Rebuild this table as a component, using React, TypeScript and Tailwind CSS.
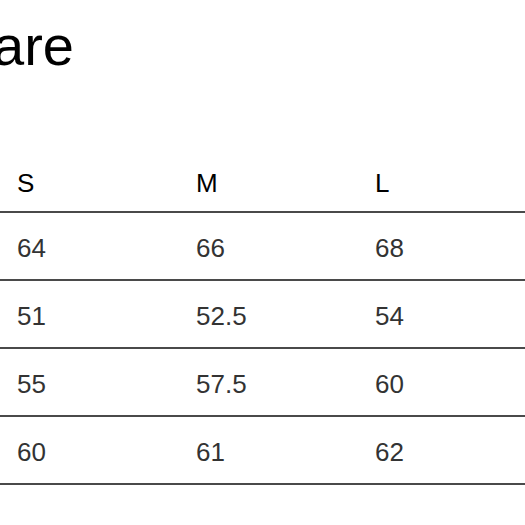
const sizes = ["S", "M", "L"];

const rows = [
  ["64", "66", "68"],
  ["51", "52.5", "54"],
  ["55", "57.5", "60"],
  ["60", "61", "62"],
];

export default function App() {
  return (
    <div className="w-[525px] h-[525px] overflow-hidden bg-white font-['Liberation_Sans',Arial,sans-serif]">
      <h1 className="-ml-[7px] mt-[18px] text-[56px] leading-none text-black">are</h1>

      <div className="mt-[71px]">
        <div className="grid grid-cols-[179px_179px_1fr] h-[68px] pt-[10px] items-center border-b-2 border-[#4a4a4a] text-[26px] text-black">
          {sizes.map((s) => (
            <div key={s} className="pl-[17px]">
              {s}
            </div>
          ))}
        </div>

        {rows.map((row, i) => (
          <div
            key={i}
            className="grid grid-cols-[179px_179px_1fr] h-[68px] pt-[4px] items-center border-b-2 border-[#4a4a4a] text-[26px] text-[#333]"
          >
            {row.map((v, j) => (
              <div key={j} className="pl-[17px]">
                {v}
              </div>
            ))}
          </div>
        ))}
      </div>
    </div>
  );
}
